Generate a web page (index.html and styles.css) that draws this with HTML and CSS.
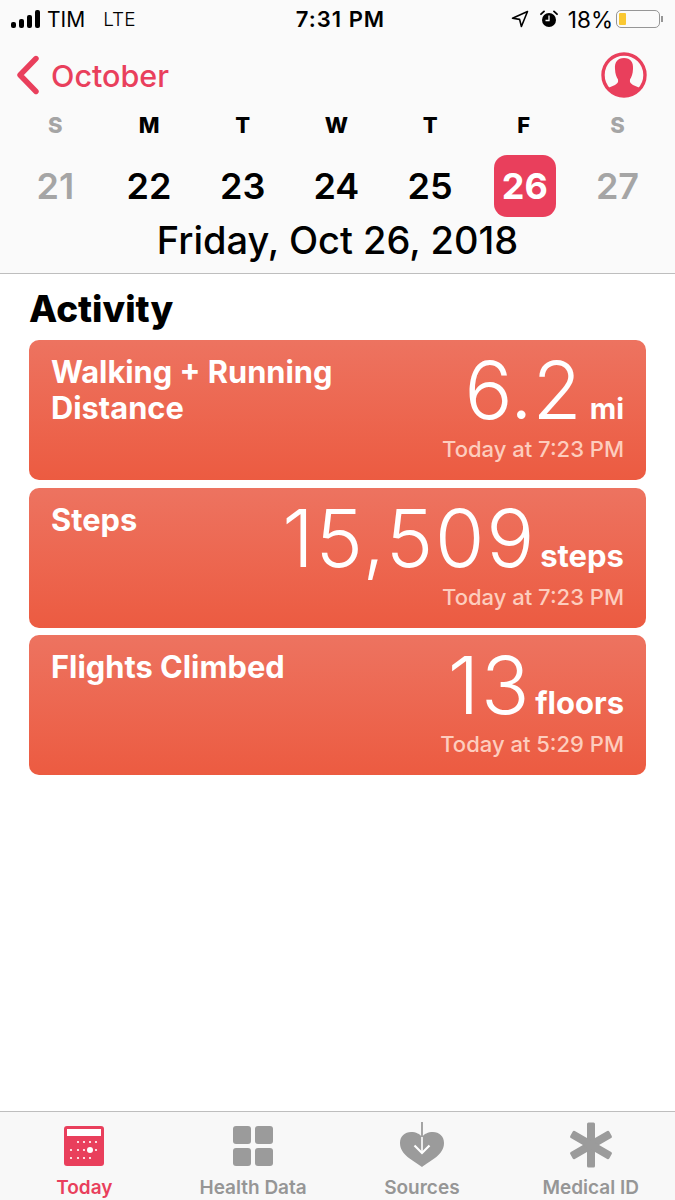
FILE: index.html
```html
<!DOCTYPE html>
<html lang="en">

<head>
    <meta charset="UTF-8">
    <meta name="viewport" content="width=device-width, initial-scale=1.0">
    <title>Health | Today</title>
    <link rel="stylesheet" href="styles.css">
</head>

<body>
    <header class="topArea">
        <div class="statusBar">
            <div class="statusLeft">
                <span class="signal"><i class="s1"></i><i class="s2"></i><i class="s3"></i><i class="s4"></i></span>
                <span class="carrier">TIM</span>
                <span class="network">LTE</span>
            </div>
            <div class="statusTime">7:31 PM</div>
            <div class="statusRight">
                <svg class="arrowIcon" viewBox="0 0 18 18" width="18" height="18">
                    <path d="M16.5 1.5 L1.5 8.2 L8.6 9.4 L10.4 16.5 Z" fill="none" stroke="#000" stroke-width="1.6" stroke-linejoin="round" />
                </svg>
                <svg class="alarmIcon" viewBox="0 0 18 18" width="18" height="18">
                    <circle cx="9" cy="10" r="7" fill="#000" />
                    <path d="M9 5.5 V10.5 H5.5" fill="none" stroke="#fafafa" stroke-width="1.3" />
                    <path d="M1 4.2 L4 1.4 M17 4.2 L14 1.4" stroke="#000" stroke-width="1.8" stroke-linecap="round" />
                </svg>
                <span class="percent">18%</span>
                <span class="battery"><span class="batteryFill"></span></span>
                <span class="batteryTip"></span>
            </div>
        </div>
        <div class="navRow">
            <div class="backLink">
                <svg viewBox="0 0 26 40" width="26" height="40">
                    <path d="M22 3.5 L6 20 L22 36.5" fill="none" stroke="#e93f5c" stroke-width="5.4" stroke-linecap="round" stroke-linejoin="round" />
                </svg>
                <span>October</span>
            </div>
            <svg class="profileIcon" viewBox="0 0 46 46" width="46" height="46">
                <circle cx="23" cy="23" r="21" fill="#fafafa" stroke="#e93f5c" stroke-width="3.4" />
                <path d="M23 6 C29.500 6 32.500 10 32 17 C31.800 22 30.500 25 29 27.500 C28.500 30 29.500 31.500 32 33 L39 36 C35 41 29 44 23 44 C17 44 11 41 7 36 L14 33 C16.500 31.500 17.500 30 17 27.500 C15.500 25 14.200 22 14 17 C13.500 10 16.500 6 23 6 Z" fill="#e93f5c" />
            </svg>
        </div>
        <div class="weekRow">
            <span class="muted">S</span><span>M</span><span>T</span><span>W</span><span>T</span><span>F</span><span class="muted">S</span>
        </div>
        <div class="dayRow">
            <span class="muted">21</span><span>22</span><span>23</span><span>24</span><span>25</span><span class="selected">26</span><span class="muted">27</span>
        </div>
        <div class="fullDate">Friday, Oct 26, 2018</div>
    </header>

    <main class="content">
        <h1>Activity</h1>
        <section class="card">
            <div class="cardTitle">Walking + Running<br>Distance</div>
            <div class="cardData">
                <div class="cardValue tight">6.2<span class="unit short">mi</span></div>
                <div class="cardTime">Today at 7:23 PM</div>
            </div>
        </section>
        <section class="card">
            <div class="cardTitle">Steps</div>
            <div class="cardData">
                <div class="cardValue">15,509<span class="unit">steps</span></div>
                <div class="cardTime">Today at 7:23 PM</div>
            </div>
        </section>
        <section class="card">
            <div class="cardTitle">Flights Climbed</div>
            <div class="cardData">
                <div class="cardValue">13<span class="unit">floors</span></div>
                <div class="cardTime">Today at 5:29 PM</div>
            </div>
        </section>
    </main>

    <nav class="tabBar">
        <div class="tab active">
            <svg viewBox="-3 -4 46 46" width="46" height="46">
                <rect x="0" y="0" width="40" height="40" rx="3" fill="#e93f5c" />
                <rect x="3" y="3" width="34" height="7" fill="#fff" />
                <g fill="#fff">
                    <circle cx="14" cy="16" r="1.1" /><circle cx="20" cy="16" r="1.1" /><circle cx="26" cy="16" r="1.1" /><circle cx="32" cy="16" r="1.1" />
                    <circle cx="7" cy="24" r="1.1" /><circle cx="14" cy="24" r="1.1" /><circle cx="20" cy="24" r="1.1" /><circle cx="26" cy="24" r="3" /><circle cx="32" cy="24" r="1.1" />
                    <circle cx="7" cy="32" r="1.1" /><circle cx="14" cy="32" r="1.1" /><circle cx="20" cy="32" r="1.1" /><circle cx="26" cy="32" r="1.1" />
                </g>
            </svg>
            <span>Today</span>
        </div>
        <div class="tab">
            <svg viewBox="-3 -4 46 46" width="46" height="46">
                <rect x="0" y="0" width="18" height="18" rx="3" fill="#9b9b9b" />
                <rect x="22" y="0" width="18" height="18" rx="3" fill="#9b9b9b" />
                <rect x="0" y="22" width="18" height="18" rx="3" fill="#9b9b9b" />
                <rect x="22" y="22" width="18" height="18" rx="3" fill="#9b9b9b" />
            </svg>
            <span>Health Data</span>
        </div>
        <div class="tab">
            <svg viewBox="0 0 46 46" width="46" height="46">
                <path d="M23 45 C14 38 1 33 1 21 C1 14 6 10 12 10 C17 10 21 12 23 15 C25 12 29 10 34 10 C40 10 45 14 45 21 C45 33 32 38 23 45 Z" fill="#9b9b9b" />
                <path d="M23 0 V15" stroke="#9b9b9b" stroke-width="1.800" />
                <path d="M23 15 V31" stroke="#fff" stroke-width="1.600" />
                <path d="M15.500 23.500 L23 31 L30.500 23.500" fill="none" stroke="#fff" stroke-width="2.200" />
            </svg>
            <span>Sources</span>
        </div>
        <div class="tab">
            <svg viewBox="0 0 46 46" width="46" height="46">
                <g fill="#9b9b9b">
                    <rect x="19" y="0.500" width="8" height="45" rx="1.500" />
                    <rect x="19" y="0.500" width="8" height="45" rx="1.500" transform="rotate(60 23 23)" />
                    <rect x="19" y="0.500" width="8" height="45" rx="1.500" transform="rotate(-60 23 23)" />
                </g>
            </svg>
            <span>Medical ID</span>
        </div>
    </nav>
</body>

</html>
```

FILE: styles.css
```css
html {
    background-color: white;
}

body {
    margin: 0;
    height: 1200px;
    overflow: hidden;
    display: flex;
    flex-direction: column;
    font-family: Inter, "Liberation Sans", sans-serif;
    color: black;
}

.topArea {
    height: 273px;
    background-color: rgb(250, 250, 250);
    border-bottom: 1px solid rgb(190, 190, 190);
    flex-shrink: 0;
}

.statusBar {
    height: 38px;
    padding: 0 12px 0 11px;
    display: grid;
    grid-template-columns: 1fr auto 1fr;
    align-items: center;
    font-size: 21px;
}

.statusLeft {
    display: flex;
    align-items: center;
}

.signal {
    display: flex;
    align-items: flex-end;
    gap: 3px;
    height: 18px;
    width: 30px;
}

.signal i {
    display: block;
    width: 5px;
    background-color: black;
    border-radius: 2px;
}

.s1 { height: 6px; }
.s2 { height: 9px; }
.s3 { height: 13px; }
.s4 { height: 18px; }

.carrier {
    margin-left: 6px;
}

.network {
    margin-left: 18px;
    font-weight: 300;
    font-size: 19px;
}

.statusTime {
    margin-left: 7px;
    font-weight: 600;
    font-size: 22px;
    letter-spacing: 1px;
}

.statusRight {
    display: flex;
    align-items: center;
    justify-content: flex-end;
}

.arrowIcon {
    margin-right: 11px;
}

.alarmIcon {
    margin-right: 10px;
}

.percent {
    margin-right: 3px;
    font-size: 22.500px;
}

.battery {
    width: 44px;
    height: 18px;
    box-sizing: border-box;
    border: 1.500px solid rgb(150, 150, 150);
    border-radius: 5px;
    padding: 2px;
}

.batteryFill {
    display: block;
    width: 7px;
    height: 100%;
    background-color: rgb(250, 200, 50);
    border-radius: 1px;
}

.batteryTip {
    width: 2px;
    height: 6px;
    margin-left: 1px;
    background-color: rgb(150, 150, 150);
}

.navRow {
    height: 46px;
    margin-top: 14px;
    padding: 0 28px 0 14px;
    display: flex;
    justify-content: space-between;
    align-items: center;
}

.backLink {
    display: flex;
    align-items: center;
    gap: 11px;
    color: rgb(233, 63, 92);
    font-size: 30.500px;
    font-weight: 500;
}

.weekRow,
.dayRow {
    display: grid;
    grid-template-columns: repeat(7, 93.700px);
    padding-left: 8.500px;
    justify-items: center;
    align-items: center;
}

.weekRow {
    height: 26px;
    margin-top: 14px;
    font-size: 22px;
    font-weight: 800;
}

.dayRow {
    height: 62px;
    margin-top: 17px;
    font-size: 36px;
    font-weight: 600;
}

.muted {
    color: rgb(165, 165, 165);
}

.selected {
    width: 62px;
    height: 62px;
    margin-left: 2px;
    border-radius: 13px;
    background-color: rgb(233, 63, 92);
    color: white;
    font-weight: 700;
    display: flex;
    align-items: center;
    justify-content: center;
}

.fullDate {
    text-align: center;
    font-size: 38px;
    line-height: 46px;
    font-weight: 500;
}

.content {
    flex: 1;
    padding: 0 29px;
    display: flex;
    flex-direction: column;
    gap: 7.500px;
}

.content h1 {
    margin: 14px 0 3.500px 0;
    font-size: 36.800px;
    line-height: 41px;
    font-weight: 800;
}

.card {
    height: 140px;
    box-sizing: border-box;
    padding: 12px 22px 0 22px;
    border-radius: 10px;
    background: linear-gradient(rgb(237, 115, 96), rgb(236, 91, 65));
    color: white;
    display: flex;
    justify-content: space-between;
}

.cardTitle {
    margin-top: 2px;
    font-size: 30.800px;
    line-height: 36px;
    font-weight: 700;
}

.cardData {
    display: flex;
    flex-direction: column;
    align-items: flex-end;
    gap: 8px;
}

.cardValue {
    font-size: 80px;
    line-height: 76px;
    font-weight: 300;
    letter-spacing: 1.800px;
    white-space: nowrap;
}

.tight {
    letter-spacing: 0;
}

.unit {
    font-size: 31px;
    line-height: 1;
    font-weight: 700;
    letter-spacing: 0;
    margin-left: 4px;
}

.short {
    font-size: 29px;
    margin-left: 8px;
}

.cardTime {
    font-size: 22px;
    line-height: 26px;
    font-weight: 500;
    color: rgb(253, 205, 190);
}

.tabBar {
    height: 88px;
    flex-shrink: 0;
    background-color: rgb(248, 248, 248);
    border-top: 1px solid rgb(190, 190, 190);
    display: grid;
    grid-template-columns: repeat(4, 1fr);
}

.tab {
    display: flex;
    flex-direction: column;
    align-items: center;
    justify-content: flex-end;
    gap: 9px;
    color: rgb(150, 150, 150);
    font-size: 19px;
    font-weight: 600;
    padding-bottom: 1px;
}

.tab span {
    line-height: 22px;
}

.tab.active {
    color: rgb(233, 63, 92);
}
```
